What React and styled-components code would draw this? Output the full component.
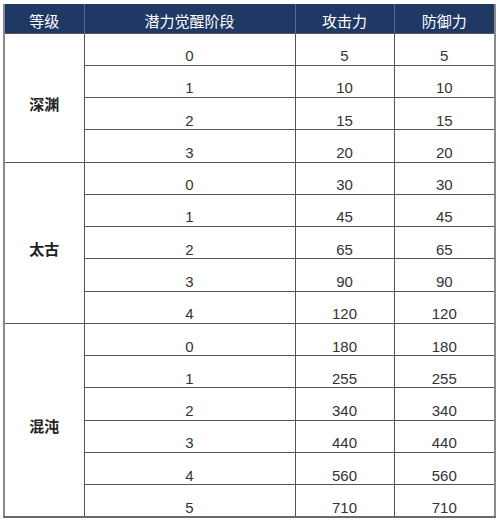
import React from 'react';
import styled, { createGlobalStyle } from 'styled-components';

const GlobalStyle = createGlobalStyle`
  html, body {
    margin: 0;
    padding: 0;
    background: #ffffff;
  }
  body {
    font-family: "Liberation Sans", "Noto Sans CJK SC", sans-serif;
  }
`;

const groups = [
  { name: '深渊', rows: [[0, 5, 5], [1, 10, 10], [2, 15, 15], [3, 20, 20]] },
  { name: '太古', rows: [[0, 30, 30], [1, 45, 45], [2, 65, 65], [3, 90, 90], [4, 120, 120]] },
  {
    name: '混沌',
    rows: [[0, 180, 180], [1, 255, 255], [2, 340, 340], [3, 440, 440], [4, 560, 560], [5, 710, 710]],
  },
];

const App = () => (
  <>
    <GlobalStyle />
    <Page>
      <Table>
        <colgroup>
          <col style={{ width: 80 }} />
          <col style={{ width: 211 }} />
          <col style={{ width: 99 }} />
          <col style={{ width: 101 }} />
        </colgroup>
        <thead>
          <tr>
            <HeadCell>等级</HeadCell>
            <HeadCell>潜力觉醒阶段</HeadCell>
            <HeadCell>攻击力</HeadCell>
            <HeadCell>防御力</HeadCell>
          </tr>
        </thead>
        <tbody>
          {groups.map(({ name, rows }) =>
            rows.map(([stage, atk, def], i) => (
              <Row key={name + stage}>
                {i === 0 && <GroupCell rowSpan={rows.length}>{name}</GroupCell>}
                <NumCell>{stage}</NumCell>
                <NumCell>{atk}</NumCell>
                <NumCell>{def}</NumCell>
              </Row>
            ))
          )}
        </tbody>
      </Table>
    </Page>
  </>
);

export default App;

const Page = styled.div`
  padding: 4px 0 0 3px;
  width: 500px;
  height: 521px;
  box-sizing: border-box;
`;

const Table = styled.table`
  border-collapse: collapse;
  table-layout: fixed;
  width: 491px;
  border-left: 2px solid #8a8a8a;
  border-right: 2px solid #8a8a8a;
  border-bottom: 2px solid #6a6a6a;
`;

const HeadCell = styled.th`
  height: 29px;
  padding: 6px 0 0;
  box-sizing: border-box;
  background: #1f3864;
  color: #ffffff;
  font-family: "Noto Sans CJK SC", sans-serif;
  font-size: 15px;
  font-weight: 400;
  text-align: center;
  border-left: 1px solid #5a6a88;
  line-height: 20px;
`;

const Row = styled.tr`
  height: 32.27px;
`;

const GroupCell = styled.td`
  padding: 12px 0 0;
  text-align: center;
  vertical-align: middle;
  font-family: "Noto Sans CJK SC", sans-serif;
  font-size: 15px;
  font-weight: 700;
  color: #222;
  border: 1px solid #555;
  border-left: none;
`;

const NumCell = styled.td`
  padding: 13px 0 0;
  box-sizing: border-box;
  text-align: center;
  vertical-align: middle;
  font-family: "Liberation Sans", sans-serif;
  font-size: 15px;
  line-height: 17px;
  color: #333;
  border: 1px solid #555;
`;
